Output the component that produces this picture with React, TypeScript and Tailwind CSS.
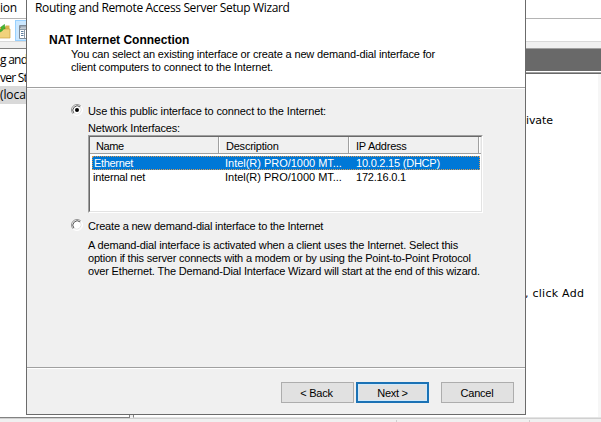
function Radio({ checked = false }: { checked?: boolean }) {
  return (
    <svg className="h-3 w-3 shrink-0" viewBox="0 0 12 12" fill="none">
      <circle cx="6" cy="6" r="5" fill="#fff" />
      <path d="M2.1 9.9A5.5 5.5 0 0 1 9.9 2.1" stroke="#969696" />
      <path d="M9.9 2.1A5.5 5.5 0 0 1 2.1 9.9" stroke="#fff" />
      <path d="M2.9 9.1A4.4 4.4 0 0 1 9.1 2.9" stroke="#555" />
      <path d="M9.1 2.9A4.4 4.4 0 0 1 2.9 9.1" stroke="#dedede" strokeWidth="0.8" />
      {checked && <circle cx="6" cy="6" r="2" fill="#000" />}
    </svg>
  );
}

function FolderIcon() {
  return (
    <svg className="h-[17px] w-[11px] shrink-0" viewBox="0 0 11 17" fill="none">
      <path d="M0 4h5l1-1.500h3.500V15H0z" fill="#d9b24c" />
      <path d="M-1 6h11v9H-1z" fill="#f1d27c" stroke="#cda544" strokeWidth="0.7" />
      <path d="M-1 7c1.500 0 2.500-1 3-2L.8 4.200 4.500 1.500l.5 4.500-1.200-.8C3 7.500 1 9 -1 9z" fill="#45b932" stroke="#2f9726" strokeWidth="0.6" />
    </svg>
  );
}

function PaneIcon() {
  return (
    <svg className="h-[14px] w-[14px] shrink-0" viewBox="0 0 14 14" fill="none">
      <path d="M.5.500h14v13H.5z" fill="#fff" stroke="#7f8b98" />
      <path d="M1 1h13v2.500H1z" fill="#8d9aa8" />
      <path d="M2 2.200h10" stroke="#dce3ea" strokeWidth="0.8" />
      <path d="M5.500 4v9M1 4.500h13" stroke="#8d9aa8" />
      <path d="M2 6.500h2.500M2 8.500h2.500M2 10.500h2.500M7 6.500h6M7 8.500h6M7 10.500h6" stroke="#5f7f9f" />
    </svg>
  );
}

function Background() {
  return (
    <div className="flex h-full flex-col bg-white text-[12px] font-['Open_Sans',sans-serif]">
      <div className="h-[19px] border-b border-[#b4b4b4] leading-[15px] tracking-[-0.25px]">ion</div>
      <div className="flex h-[23px] border-b border-[#d9d9d9]">
        <div className="pt-[4px]"><FolderIcon /></div>
        <div className="ml-[4px] mt-[1px] h-[21px] w-[24px] border border-[#99d1ff] bg-[#cce8ff] pl-[3px] pt-[4px]">
          <PaneIcon />
        </div>
      </div>
      <div className="h-[6px] bg-[#f0f0f0]" />
      <div className="flex min-h-0 flex-1 bg-[#f0f0f0]">
        <div className="w-[130px] border-b border-r border-t border-[#828282] bg-white">
          <div className="h-[19px] leading-[22px] tracking-[-0.75px]">g and</div>
          <div className="h-[18px] leading-[20px] tracking-[-0.75px]">ver St</div>
          <div className="h-[18px] w-[60px] bg-[#d9d9d9] leading-[18px] tracking-[-0.1px]">(loca</div>
        </div>
        <div className="ml-[3px] flex flex-1 flex-col border-b border-l border-t border-b-[#e3e3e3] border-l-[#828282] border-t-[#a0a0a0] bg-white">
          <div className="h-[22px] bg-[#696969]" />
          <div className="mt-[1px] h-[2px] border-b border-t border-b-[#696969] border-t-[#a0a0a0]" />
          <div className="flex flex-1">
            <div className="flex-1 pl-[391px] font-['DejaVu_Sans','Noto_Sans',sans-serif] text-[11px] leading-[13px]">
              <div className="mt-[40px] whitespace-nowrap pl-[1px] tracking-[-0.1px]">ivate</div>
              <div className="mt-[160px] whitespace-nowrap tracking-[0.25px]">, click Add</div>
            </div>
            <div className="w-[3px] bg-[#f6f6f6]" />
          </div>
        </div>
      </div>
      <div className="flex h-[4px] border-t border-[#d0d0d0] bg-[#f0f0f0] pt-[1px]">
        <div className="w-[397px] border-r border-[#cfcfcf]" />
        <div className="w-[133px] border-r border-[#cfcfcf]" />
      </div>
    </div>
  );
}

function InterfaceList() {
  return (
    <div className="ml-[12px] h-[78px] w-[395px] border border-b-white border-l-[#a0a0a0] border-r-white border-t-[#a0a0a0]">
      <div className="h-full border border-b-[#e3e3e3] border-l-[#696969] border-r-[#e3e3e3] border-t-[#696969] bg-white">
        <div className="flex h-[17px] border-b border-[#a0a0a0] bg-[#f0f0f0] leading-[18px]">
          <div className="w-[129px] border-r border-[#a0a0a0] pl-[6px] tracking-[-0.4px]">Name</div>
          <div className="w-[130px] border-l border-r border-l-white border-r-[#a0a0a0] pl-[6px] tracking-[-0.22px]">Description</div>
          <div className="w-[130px] border-l border-r border-l-white border-r-[#a0a0a0] pl-[6px] tracking-[-0.25px]">IP Address</div>
          <div className="flex-1 border-l border-white" />
        </div>
        <div className="ml-[2px] mt-[2px] flex h-[14px] w-[388px] border border-dotted border-[#d89a55] bg-[#0078d7] leading-[12px] text-white">
          <div className="w-[132px] pl-[1px] tracking-[-0.32px]">Ethernet</div>
          <div className="w-[131px] tracking-[-0.02px]">Intel(R) PRO/1000 MT...</div>
          <div className="tracking-[-0.22px]">10.0.2.15 (DHCP)</div>
        </div>
        <div className="ml-[3px] flex h-[14px] leading-[14px]">
          <div className="w-[132px] tracking-[-0.2px]">internal net</div>
          <div className="w-[131px] tracking-[-0.02px]">Intel(R) PRO/1000 MT...</div>
          <div className="tracking-[-0.2px]">172.16.0.1</div>
        </div>
      </div>
    </div>
  );
}

function Wizard() {
  return (
    <div className="absolute left-[26px] top-0 flex h-[415px] w-[500px] flex-col border-b border-l border-r border-[#6b6b6b] bg-[#f0f0f0] text-[11px] leading-[13px] font-['Liberation_Sans',Arial,sans-serif] whitespace-nowrap text-black">
      <div className="h-[88px] border-b border-[#a0a0a0] bg-white">
        <div className="h-[33px] pl-[8px] font-['Open_Sans',sans-serif] text-[12px] leading-[16px] tracking-[-0.36px]">
          Routing and Remote Access Server Setup Wizard
        </div>
        <div className="h-[15px] pl-[22px] text-[12px] leading-[14px] font-bold">NAT Internet Connection</div>
        <div className="pl-[44px] tracking-[-0.149px]">You can select an existing interface or create a new demand-dial interface for</div>
        <div className="pl-[44px] tracking-[-0.134px]">client computers to connect to the Internet.</div>
      </div>
      <div className="flex h-[280px] flex-col border-b border-t border-b-[#a0a0a0] border-t-white pl-[44px]">
        <div className="mt-[15px] flex h-[14px] gap-[5px]">
          <Radio checked />
          <span className="pt-[1px] tracking-[-0.124px]">Use this public interface to connect to the Internet:</span>
        </div>
        <div className="mt-[4px] pl-[17px] tracking-[-0.146px]">Network Interfaces:</div>
        <div className="pl-[5px]"><InterfaceList /></div>
        <div className="mt-[6px] flex h-[14px] gap-[5px]">
          <Radio />
          <span className="pt-[1px] tracking-[-0.2px]">Create a new demand-dial interface to the Internet</span>
        </div>
        <div className="mt-[6px] pl-[17px]">
          <div className="tracking-[-0.158px]">A demand-dial interface is activated when a client uses the Internet. Select this</div>
          <div className="tracking-[-0.2px]">option if this server connects with a modem or by using the Point-to-Point Protocol</div>
          <div className="tracking-[-0.17px]">over Ethernet. The Demand-Dial Interface Wizard will start at the end of this wizard.</div>
        </div>
      </div>
      <div className="flex flex-1 border-t border-white pl-[254px] pt-[13px]">
        <button className="h-[21px] w-[73px] border border-[#adadad] bg-[#e1e1e1] pr-[2px] pt-[1px] tracking-[-0.2px]">&lt; Back</button>
        <button className="ml-[2px] h-[21px] w-[73px] border-2 border-[#1b72b5] bg-[#e1e1e1] pt-[1px] tracking-[-0.25px] shadow-[inset_0_0_0_1px_#cfe9fb]">Next &gt;</button>
        <button className="ml-[12px] h-[21px] w-[73px] border border-[#adadad] bg-[#e1e1e1] pr-[1px] pt-[1px] tracking-[-0.2px]">Cancel</button>
      </div>
    </div>
  );
}

export default function App() {
  return (
    <div className="relative h-[422px] w-[601px] overflow-hidden">
      <Background />
      <Wizard />
    </div>
  );
}
